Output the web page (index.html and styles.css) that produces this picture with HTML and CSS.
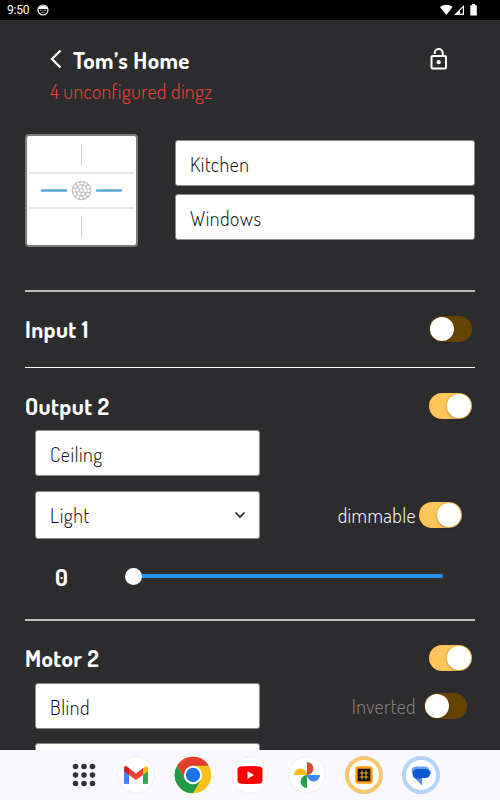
FILE: index.html
```html
<!DOCTYPE html>
<html lang="en">
<head>
    <meta charset="UTF-8">
    <meta name="viewport" content="width=device-width, initial-scale=1.0">
    <title>Tom’s Home</title>
    <link rel="stylesheet" href="styles.css">
</head>
<body>
    <div class="status-bar">
        <span class="clock">9:50</span>
        <svg class="status-face" width="12" height="12" viewBox="0 0 12 12">
            <circle cx="6" cy="6" r="5" fill="none" stroke="#fff" stroke-width="1.2"/>
            <path d="M1.500 5C2 .5 10 .5 10.500 5Z" fill="#fff"/>
            <path d="M3 6.300h2.200M6.800 6.300H9M4.500 8.300h3" stroke="#aaa"/>
        </svg>
        <svg class="status-icons" width="40" height="12" viewBox="0 0 40 12">
            <path d="M0 3Q6.300-1.500 12.600 3L6.300 11Z" fill="#fff"/>
            <path d="M14 11L24 1V11Z" fill="#fff"/>
            <path d="M20 6.500L22.800 3.700V9.800H20Z" fill="#000"/>
            <path d="M30.300 1.300H32V0H35V1.300H36.800V11.500H30.300Z" fill="#fff"/>
        </svg>
    </div>

    <main class="content">
        <div class="header">
            <svg class="back" width="12" height="20" viewBox="0 0 12 20">
                <path d="M10.500 1.500L2 10L10.500 18.500" fill="none" stroke="#fff" stroke-width="2.300"/>
            </svg>
            <h1>Tom’s Home</h1>
            <svg class="lock" width="18" height="22" viewBox="0 0 18 22">
                <rect x="1.500" y="8" width="14.500" height="12.500" rx="1" fill="none" stroke="#fff" stroke-width="2"/>
                <path d="M4.700 6V5A4 4 0 0 1 12.700 5V8" fill="none" stroke="#fff" stroke-width="2"/>
                <circle cx="8.700" cy="14.200" r="2.100" fill="#fff"/>
            </svg>
        </div>
        <p class="warning">4 unconfigured dingz</p>

        <div class="device">
            <svg width="113" height="113" viewBox="0 0 113 113">
                <rect x="1" y="1" width="111" height="111" rx="3" fill="#fff" stroke="#7c7c7c" stroke-width="2"/>
                <path d="M4 39H109M4 74H109" stroke="#e6e6e6" stroke-width="2"/>
                <path d="M56.500 10V31M56.500 82V104" stroke="#d0d0d0"/>
                <path d="M17 56.500H41M72 56.500H96" stroke="#5aa9d0" stroke-width="2.500" stroke-linecap="round"/>
                <!-- perforated speaker disc -->
                <circle cx="56.500" cy="56.500" r="9.800" fill="#c4c4c4"/>
                <g fill="none" stroke="#fff" stroke-linecap="round">
                    <circle cx="56.500" cy="56.500" r="7.300" stroke-width="2.600" stroke-dasharray=".3 3.522"/>
                    <circle cx="56.500" cy="56.500" r="3.900" stroke-width="2.800" stroke-dasharray=".3 3.784"/>
                </g>
                <circle cx="56.500" cy="56.500" r="1.300" fill="#fff"/>
            </svg>
            <div class="names">
                <div class="field">Kitchen</div>
                <div class="field">Windows</div>
            </div>
        </div>

        <section class="input-section">
            <h2>Input 1</h2>
            <span class="switch"></span>
        </section>

        <section class="output-section">
            <div class="section-head">
                <h2>Output 2</h2>
                <span class="switch on"></span>
            </div>
            <div class="field">Ceiling</div>
            <div class="option-row">
                <div class="field select">
                    Light
                    <svg width="12" height="8" viewBox="0 0 12 8">
                        <path d="M1.500 1.500L6 6L10.500 1.500" fill="none" stroke="#222" stroke-width="1.700"/>
                    </svg>
                </div>
                <span class="label dimmable">dimmable</span>
                <span class="switch on"></span>
            </div>
            <div class="slider-row">
                <span class="value">0</span>
                <div class="slider"><span class="thumb"></span></div>
            </div>
        </section>

        <section class="motor-section">
            <div class="section-head">
                <h2>Motor 2</h2>
                <span class="switch on"></span>
            </div>
            <div class="motor-row">
                <div class="field">Blind</div>
                <span class="label inverted">Inverted</span>
                <span class="switch"></span>
            </div>
            <div class="field select"></div>
        </section>
    </main>

    <nav class="dock">
        <svg width="24" height="24" viewBox="0 0 24 24" fill="#30303c">
            <circle cx="3.500" cy="3.500" r="2.800"/><circle cx="12" cy="3.500" r="2.800"/><circle cx="20.500" cy="3.500" r="2.800"/>
            <circle cx="3.500" cy="12" r="2.800"/><circle cx="12" cy="12" r="2.800"/><circle cx="20.500" cy="12" r="2.800"/>
            <circle cx="3.500" cy="20.500" r="2.800"/><circle cx="12" cy="20.500" r="2.800"/><circle cx="20.500" cy="20.500" r="2.800"/>
        </svg>
        <!-- Gmail -->
        <svg width="38" height="38" viewBox="0 0 38 38">
            <circle cx="19" cy="19" r="18" fill="#fff" stroke="#f0eff4"/>
            <path d="M7 13V26.500Q7 28 8.500 28H12V16Z" fill="#4285f4"/>
            <path d="M26 16V28H29.500Q31 28 31 26.500V13Z" fill="#34a853"/>
            <path d="M26 12.500L28 10.800Q31 9 31 12.500V15L26 19Z" fill="#fbbc04"/>
            <path d="M7 15V12.500Q7 9 10 10.500L12 12V19Z" fill="#c5221f"/>
            <path d="M12 12L19 17.500L26 12V19L19 24L12 19Z" fill="#ea4335"/>
        </svg>
        <!-- Chrome -->
        <svg width="38" height="38" viewBox="0 0 38 38">
            <circle cx="19" cy="19" r="18.300" fill="#fbc116"/>
            <path d="M3.150 9.850A18.300 18.300 0 0 1 34.850 9.850H19L11 23.500Z" fill="#e33b2e"/>
            <path d="M3.150 9.850A18.300 18.300 0 0 0 19 37.300L27 23.500H11Z" fill="#229a49"/>
            <circle cx="19" cy="19" r="9.200" fill="#fff"/>
            <circle cx="19" cy="19" r="7.200" fill="#1a73e8"/>
        </svg>
        <!-- YouTube -->
        <svg width="38" height="38" viewBox="0 0 38 38">
            <circle cx="19" cy="19" r="18" fill="#fff" stroke="#f0eff4"/>
            <path d="M9 10.500Q19 9.500 29 10.500Q31 11 31.500 13V25Q31 27 29 27.500Q19 28.500 9 27.500Q7 27 6.500 25V13Q7 11 9 10.500Z" fill="#f00"/>
            <path d="M16.500 15.300L23 19L16.500 22.700Z" fill="#fff"/>
        </svg>
        <!-- Photos -->
        <svg width="38" height="38" viewBox="0 0 38 38">
            <circle cx="19" cy="19" r="18" fill="#fff" stroke="#f0eff4"/>
            <path d="M19 19V6A6.500 6.500 0 0 1 19 19Z" fill="#ea4335"/>
            <path d="M19 19H32A6.500 6.500 0 0 1 19 19Z" fill="#4285f4"/>
            <path d="M19 19V32A6.500 6.500 0 0 1 19 19Z" fill="#22a04b"/>
            <path d="M19 19H6A6.500 6.500 0 0 1 19 19Z" fill="#fbbc04"/>
        </svg>
        <svg width="38" height="38" viewBox="0 0 38 38">
            <circle cx="19" cy="19" r="17" fill="#fff" stroke="#fac66c" stroke-width="4"/>
            <circle cx="19" cy="19" r="18.700" fill="none" stroke="#d5cdc5" stroke-width=".6"/>
            <rect x="11.500" y="11.500" width="15" height="15" rx="1.500" fill="#111" stroke="#ff9f0a" stroke-width="2.400"/>
            <path d="M17 14.500V23.500M21 14.500V23.500M14.500 17H23.500M14.500 21H23.500" stroke="#e7a52b" stroke-width="1.100"/>
        </svg>
        <!-- Messages -->
        <svg width="38" height="38" viewBox="0 0 38 38">
            <circle cx="19" cy="19" r="17" fill="#fff" stroke="#b3d3fb" stroke-width="4"/>
            <circle cx="19" cy="19" r="18.700" fill="none" stroke="#cbd1dc" stroke-width=".6"/>
            <path d="M15 10.500H23Q26.500 10.500 27 13.500Q29.500 14.500 29 18H11Q9.500 16.500 9.500 14.500Q10 10.500 15 10.500Z" fill="#6f9cf8"/>
            <path d="M16 13H23Q28 13 28 17.500Q28 22 23 22H20V29L14 23Q10.500 21 10.500 17.500Q11 13 16 13Z" fill="#0b57d0"/>
            <path d="M12.500 21.700Q14 22.500 16 22.500H20V29Z" fill="#5b8df0"/>
        </svg>
    </nav>
</body>
</html>
```
FILE: styles.css
```css
* {
    box-sizing: border-box;
}

body {
    margin: 0;
    height: 800px;
    display: flex;
    flex-direction: column;
    overflow: hidden;
    background-color: #2c2c2e;
    color: #fff;
    font-family: Dosis, Lato, sans-serif;
    font-size: 20px;
    font-weight: 300;
    letter-spacing: 0.5px;
}

svg {
    display: block;
    flex: none;
}

h1, h2, p {
    margin: 0;
}

.status-bar {
    flex: none;
    display: flex;
    align-items: center;
    height: 20px;
    padding: 0 20px 0 7px;
    background-color: #000;
    font-family: Roboto, sans-serif;
    font-size: 12px;
    font-weight: 400;
    letter-spacing: -0.2px;
}

.clock {
    width: 30px;
}

.status-icons {
    margin-left: auto;
}

.content {
    flex: 1;
    min-height: 0;
    overflow: hidden;
    padding: 23px 25px 0;
}

.header {
    display: flex;
    align-items: center;
    height: 32px;
    padding: 0 27px 0 25px;
}

h1 {
    margin-left: 11px;
    font-size: 23px;
    font-weight: 700;
    letter-spacing: 0.4px;
}

.lock {
    margin-left: auto;
}

.warning {
    padding-left: 25px;
    height: 59px;
    line-height: 33px;
    color: #f44336;
    letter-spacing: 0.35px;
}

.device {
    display: flex;
    justify-content: space-between;
    height: 156px;
}

.names {
    display: flex;
    flex-direction: column;
    gap: 8px;
    width: 300px;
    padding-top: 6px;
}

.field {
    width: 225px;
    height: 46px;
    padding: 0 14px;
    border: 1px solid #8c8c8c;
    border-radius: 3px;
    background-color: #fff;
    color: #111;
    line-height: 47px;
}

.names .field {
    width: 300px;
}

section {
    border-top: 2px solid #bebebe;
}

.input-section {
    display: flex;
    align-items: center;
    justify-content: space-between;
    height: 77px;
    padding: 0 3px 2px 0;
}

h2 {
    font-size: 23px;
    font-weight: 700;
    letter-spacing: 0.4px;
}

.switch {
    flex: none;
    width: 43px;
    height: 26px;
    padding: 1px;
    border-radius: 13px;
    background-color: #664400;
}

.switch::before {
    content: "";
    display: block;
    width: 24px;
    height: 24px;
    border-radius: 50%;
    background-color: #fff;
    box-shadow: 0 1px 3px rgba(0, 0, 0, 0.3);
}

.switch.on {
    background-color: #ffc559;
}

.switch.on::before {
    margin-left: 17px;
}

.output-section {
    height: 252px;
    padding: 14px 0 0 10px;
    border-top: 1px solid #fff;
}

.section-head {
    display: flex;
    align-items: center;
    justify-content: space-between;
    height: 48px;
    margin-left: -10px;
    padding: 0 3px 1px 0;
}

.option-row {
    display: flex;
    align-items: center;
    margin-top: 15px;
    padding-right: 13px;
}

.select {
    display: flex;
    align-items: center;
    justify-content: space-between;
    height: 48px;
}

.select svg {
    margin-right: -1px;
}

.label {
    margin-left: auto;
    letter-spacing: 0.4px;
}

.dimmable {
    margin-right: 3px;
}

.inverted {
    margin-right: 8px;
    color: #858585;
}

.slider-row {
    display: flex;
    align-items: center;
    height: 74px;
    padding: 0 32px 0 20px;
}

.value {
    width: 79px;
    font-size: 23px;
    font-weight: 700;
}

.slider {
    flex: 1;
    display: flex;
    align-items: center;
    height: 4px;
    border-radius: 2px;
    background-color: #2196f3;
}

.thumb {
    width: 17px;
    height: 17px;
    margin-left: -9px;
    border-radius: 50%;
    background-color: #fff;
}

.motor-section {
    padding: 13px 0 0 10px;
}

.motor-section .section-head {
    height: 49px;
    padding-bottom: 2px;
}

.motor-row {
    display: flex;
    align-items: center;
    margin-bottom: 14px;
    padding-right: 8px;
}

.dock {
    flex: none;
    display: flex;
    align-items: center;
    gap: 19px;
    height: 50px;
    padding-left: 72px;
    background-color: #faf8ff;
}

.dock svg:first-child {
    margin-right: 2px;
}
```
